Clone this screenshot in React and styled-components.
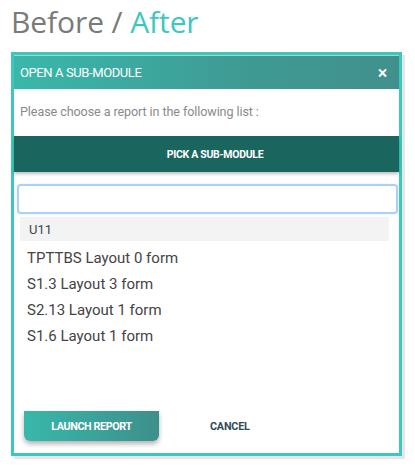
import React from 'react';
import styled, { createGlobalStyle } from 'styled-components';

const GlobalStyle = createGlobalStyle`
  body {
    margin: 0;
    background: #ffffff;
    font-family: Roboto, "Liberation Sans", sans-serif;
  }
`;

const Page = styled.div`
  width: 415px;
  height: 473px;
  overflow: hidden;
`;

const Title = styled.h1`
  margin: 0;
  padding: 2px 0 0 11px;
  font-family: "Open Sans", "Liberation Sans", sans-serif;
  font-weight: 400;
  font-size: 30px;
  line-height: 40px;
  height: 50px;
  color: #7a7a7a;
  letter-spacing: -0.1px;
`;

const Accent = styled.span`
  color: #3cc8bf;
`;

const Frame = styled.div`
  margin-left: 11px;
  width: 385px;
  border: 3px solid #3cc8bf;
  box-shadow: 3px 3px 0 #e6e6e6;
  background: #ffffff;
  display: flex;
  flex-direction: column;
`;

const Header = styled.div`
  height: 33px;
  display: flex;
  align-items: center;
  justify-content: space-between;
  padding: 0 12px 0 6px;
  background: linear-gradient(90deg, #39b8aa 0%, #3f9a94 60%, #41908d 100%);
  border-top: 1px solid #9fd9d2;
  color: #ffffff;
  font-size: 13px;
  letter-spacing: -0.4px;
`;

const Close = styled.span`
  font-size: 18px;
  font-weight: 500;
  line-height: 1;
`;

const Description = styled.div`
  height: 47px;
  display: flex;
  align-items: center;
  padding: 0 0 3px 6px;
  box-sizing: border-box;
  font-size: 12.6px;
  color: #8a8a8a;
  letter-spacing: -0.1px;
`;

const PickBar = styled.div`
  height: 36px;
  display: flex;
  align-items: center;
  justify-content: center;
  padding-left: 17px;
  background: #1a665f;
  color: #ffffff;
  font-size: 10.5px;
  font-weight: 700;
  letter-spacing: -0.3px;
  box-shadow: 0 2px 3px rgba(0, 0, 0, 0.25);
`;

const Body = styled.div`
  padding: 12px 1px 0 3px;
  height: 214px;
  display: flex;
  flex-direction: column;
`;

const Search = styled.input`
  height: 30px;
  box-sizing: border-box;
  border: 2px solid #a9d2fa;
  border-radius: 4px;
  box-shadow: 0 0 2px #c9e4ff;
  outline: none;
  font-family: inherit;
  font-size: 13px;
  padding: 0 8px;
`;

const List = styled.div`
  margin: 3px 9px 0 3px;
  display: flex;
  flex-direction: column;
`;

const Group = styled.div`
  height: 24px;
  margin-bottom: 4px;
  display: flex;
  align-items: center;
  padding-left: 9px;
  background: #f3f3f3;
  color: #444444;
  font-size: 13px;
`;

const Item = styled.div`
  height: 26px;
  display: flex;
  align-items: center;
  padding-left: 7px;
  color: #444444;
  font-size: 15px;
`;

const Footer = styled.div`
  display: flex;
  align-items: center;
  padding: 13px 0 12px 10px;
`;

const Launch = styled.button`
  width: 135px;
  height: 30px;
  border: none;
  border-radius: 0 0 6px 6px;
  background: linear-gradient(90deg, #38b8aa 0%, #3e8f8b 100%);
  box-shadow: 0 3px 5px rgba(0, 0, 0, 0.3);
  color: #ffffff;
  font-family: inherit;
  font-size: 10.8px;
  font-weight: 700;
  letter-spacing: -0.4px;
`;

const Cancel = styled.button`
  margin-left: 45px;
  border: none;
  background: none;
  color: #2e4c5c;
  font-family: inherit;
  font-size: 10.8px;
  font-weight: 700;
  letter-spacing: -0.2px;
`;

const items = [
  'TPTTBS Layout 0 form',
  'S1.3 Layout 3 form',
  'S2.13 Layout 1 form',
  'S1.6 Layout 1 form',
];

export default function App() {
  return (
    <Page>
      <GlobalStyle />
      <Title>
        Before / <Accent>After</Accent>
      </Title>
      <Frame>
        <Header>
          <span>OPEN A SUB-MODULE</span>
          <Close>×</Close>
        </Header>
        <Description>Please choose a report in the following list :</Description>
        <PickBar>PICK A SUB-MODULE</PickBar>
        <Body>
          <Search />
          <List>
            <Group>U11</Group>
            {items.map((name) => (
              <Item key={name}>{name}</Item>
            ))}
          </List>
        </Body>
        <Footer>
          <Launch>LAUNCH REPORT</Launch>
          <Cancel>CANCEL</Cancel>
        </Footer>
      </Frame>
    </Page>
  );
}
